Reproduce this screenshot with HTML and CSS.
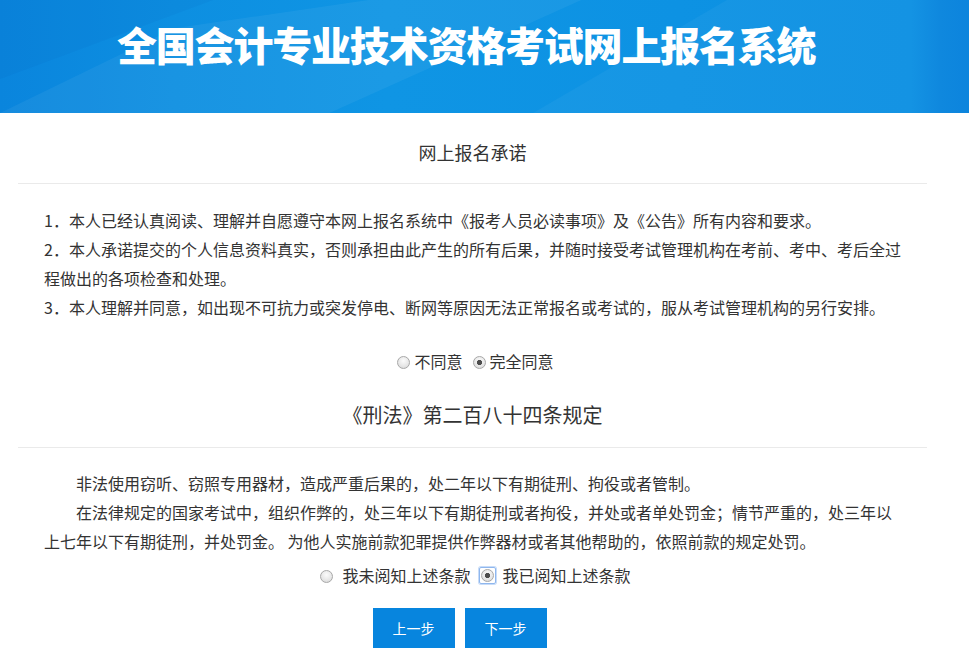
FILE: index.html
```html
<!DOCTYPE html>
<html lang="zh-CN">
<head>
<meta charset="utf-8">
<title>全国会计专业技术资格考试网上报名系统</title>
<link rel="stylesheet" href="styles.css">
</head>
<body>
<header class="banner">
  <div class="shape shape-a"></div>
  <div class="shape shape-b"></div>
  <div class="shape shape-c"></div>
  <h1 class="banner-title">全国会计专业技术资格考试网上报名系统</h1>
</header>

<main class="content">
  <section class="block">
    <h2 class="block-title small">网上报名承诺</h2>
    <div class="block-body">
      <p class="line">1．本人已经认真阅读、理解并自愿遵守本网上报名系统中《报考人员必读事项》及《公告》所有内容和要求。</p>
      <p class="line">2．本人承诺提交的个人信息资料真实，否则承担由此产生的所有后果，并随时接受考试管理机构在考前、考中、考后全过程做出的各项检查和处理。</p>
      <p class="line">3．本人理解并同意，如出现不可抗力或突发停电、断网等原因无法正常报名或考试的，服从考试管理机构的另行安排。</p>
    </div>
    <div class="choice choice-tight">
      <label class="opt"><input type="radio" name="agree" class="radio"><span>不同意</span></label>
      <label class="opt"><input type="radio" name="agree" class="radio" checked><span>完全同意</span></label>
    </div>
  </section>

  <section class="block">
    <h2 class="block-title">《刑法》第二百八十四条规定</h2>
    <div class="block-body law">
      <p class="line indent">非法使用窃听、窃照专用器材，造成严重后果的，处二年以下有期徒刑、拘役或者管制。</p>
      <p class="line indent">在法律规定的国家考试中，组织作弊的，处三年以下有期徒刑或者拘役，并处或者单处罚金；情节严重的，处三年以上七年以下有期徒刑，并处罚金。 为他人实施前款犯罪提供作弊器材或者其他帮助的，依照前款的规定处罚。</p>
    </div>
    <div class="choice choice-wide">
      <label class="opt"><input type="radio" name="read" class="radio"><span>我未阅知上述条款</span></label>
      <label class="opt"><span class="focus-ring"><input type="radio" name="read" class="radio" checked></span><span>我已阅知上述条款</span></label>
    </div>
  </section>

  <div class="actions">
    <button class="btn" type="button">上一步</button>
    <button class="btn" type="button">下一步</button>
  </div>
</main>
</body>
</html>
```

FILE: styles.css
```css
html, body {
  margin: 0;
  padding: 0;
  background: #ffffff;
}

body {
  font-family: "Noto Sans CJK SC", "Noto Sans", "Liberation Sans", sans-serif;
  color: #333333;
  font-size: 16px;
}

/* ---------- banner ---------- */
.banner {
  position: relative;
  overflow: hidden;
  height: 113px;
  box-sizing: border-box;
  padding-top: 18px;
  padding-left: 117px;
  background: linear-gradient(90deg, #0a85dd 0%, #0d8fe1 18%, #0f95e4 40%, #0d92e3 70%, #0b8fe2 94%, #0684dd 97%, #0380dc 100%);
}

.shape {
  position: absolute;
  inset: 0;
  pointer-events: none;
}

.shape-a {
  background: rgba(255, 255, 255, 0.05);
  clip-path: polygon(0 100%, 18% 25%, 38% 0, 60% 0, 34% 100%);
}

.shape-b {
  background: rgba(255, 255, 255, 0.04);
  clip-path: polygon(55% 100%, 75% 0, 100% 0, 100% 100%);
}

.shape-c {
  background: rgba(0, 60, 160, 0.05);
  clip-path: polygon(0 0, 22% 0, 0 70%);
}

.banner-title {
  position: relative;
  margin: 0;
  font-size: 40px;
  line-height: 52px;
  font-weight: 900;
  letter-spacing: -1.2px;
  color: #ffffff;
  white-space: nowrap;
}

/* ---------- content ---------- */
.content {
  width: 909px;
  margin-left: 18px;
}

.block-title {
  margin: 0;
  padding: 0 0 16px;
  text-align: center;
  font-weight: 400;
  font-size: 20px;
  line-height: 30px;
  color: #333333;
  border-bottom: 1px solid #eaeaea;
}

.block-title.small {
  font-size: 18px;
  margin-top: 24px;
}

.block + .block .block-title {
  margin-top: 27px;
  padding-bottom: 17px;
}

.block-body {
  padding: 22px 23px 0 26px;
}

.block-body.law {
  padding-top: 21px;
}

.line {
  margin: 0;
  font-size: 16px;
  line-height: 29px;
}

.indent {
  text-indent: 2em;
}

/* ---------- radios ---------- */
.choice {
  display: flex;
  justify-content: center;
  align-items: center;
  font-size: 16px;
  line-height: 24px;
  padding-left: 6px;
}

.choice-tight {
  margin-top: 27px;
  gap: 10px;
}

.choice-wide {
  margin-top: 7px;
  gap: 10px;
}

.opt {
  display: inline-flex;
  align-items: center;
  cursor: pointer;
}

.choice-tight .opt {
  gap: 4px;
}

.choice-wide .opt {
  gap: 9px;
}

.radio {
  -webkit-appearance: none;
  appearance: none;
  margin: 0;
  width: 13px;
  height: 13px;
  box-sizing: border-box;
  border-radius: 50%;
  border: 1px solid #a8a8a8;
  background: radial-gradient(circle at 50% 35%, #fbfbfb 0%, #e6e6e6 60%, #d2d2d2 100%);
  position: relative;
  top: 1px;
}

.radio:checked {
  background:
    radial-gradient(circle at 50% 50%, #4d4d4d 0 2.4px, rgba(77,77,77,0) 2.9px),
    radial-gradient(circle at 50% 35%, #fbfbfb 0%, #e6e6e6 60%, #d2d2d2 100%);
}

.focus-ring {
  display: inline-flex;
  padding: 1px;
  border: 1px solid #8fb7ee;
  border-radius: 2px;
  box-shadow: 0 0 0 1px #c8dcf8;
  margin-left: -2px;
  margin-right: -2px;
}

.focus-ring .radio {
  top: 0;
}

/* ---------- buttons ---------- */
.actions {
  display: flex;
  justify-content: center;
  gap: 10px;
  margin-top: 21px;
  padding-right: 26px;
}

.btn {
  width: 82px;
  height: 40px;
  border: none;
  border-radius: 0;
  background: #0785de;
  color: #ffffff;
  font-family: "Noto Sans CJK SC", "Noto Sans", sans-serif;
  font-size: 14px;
  padding: 0;
  cursor: pointer;
}
```
